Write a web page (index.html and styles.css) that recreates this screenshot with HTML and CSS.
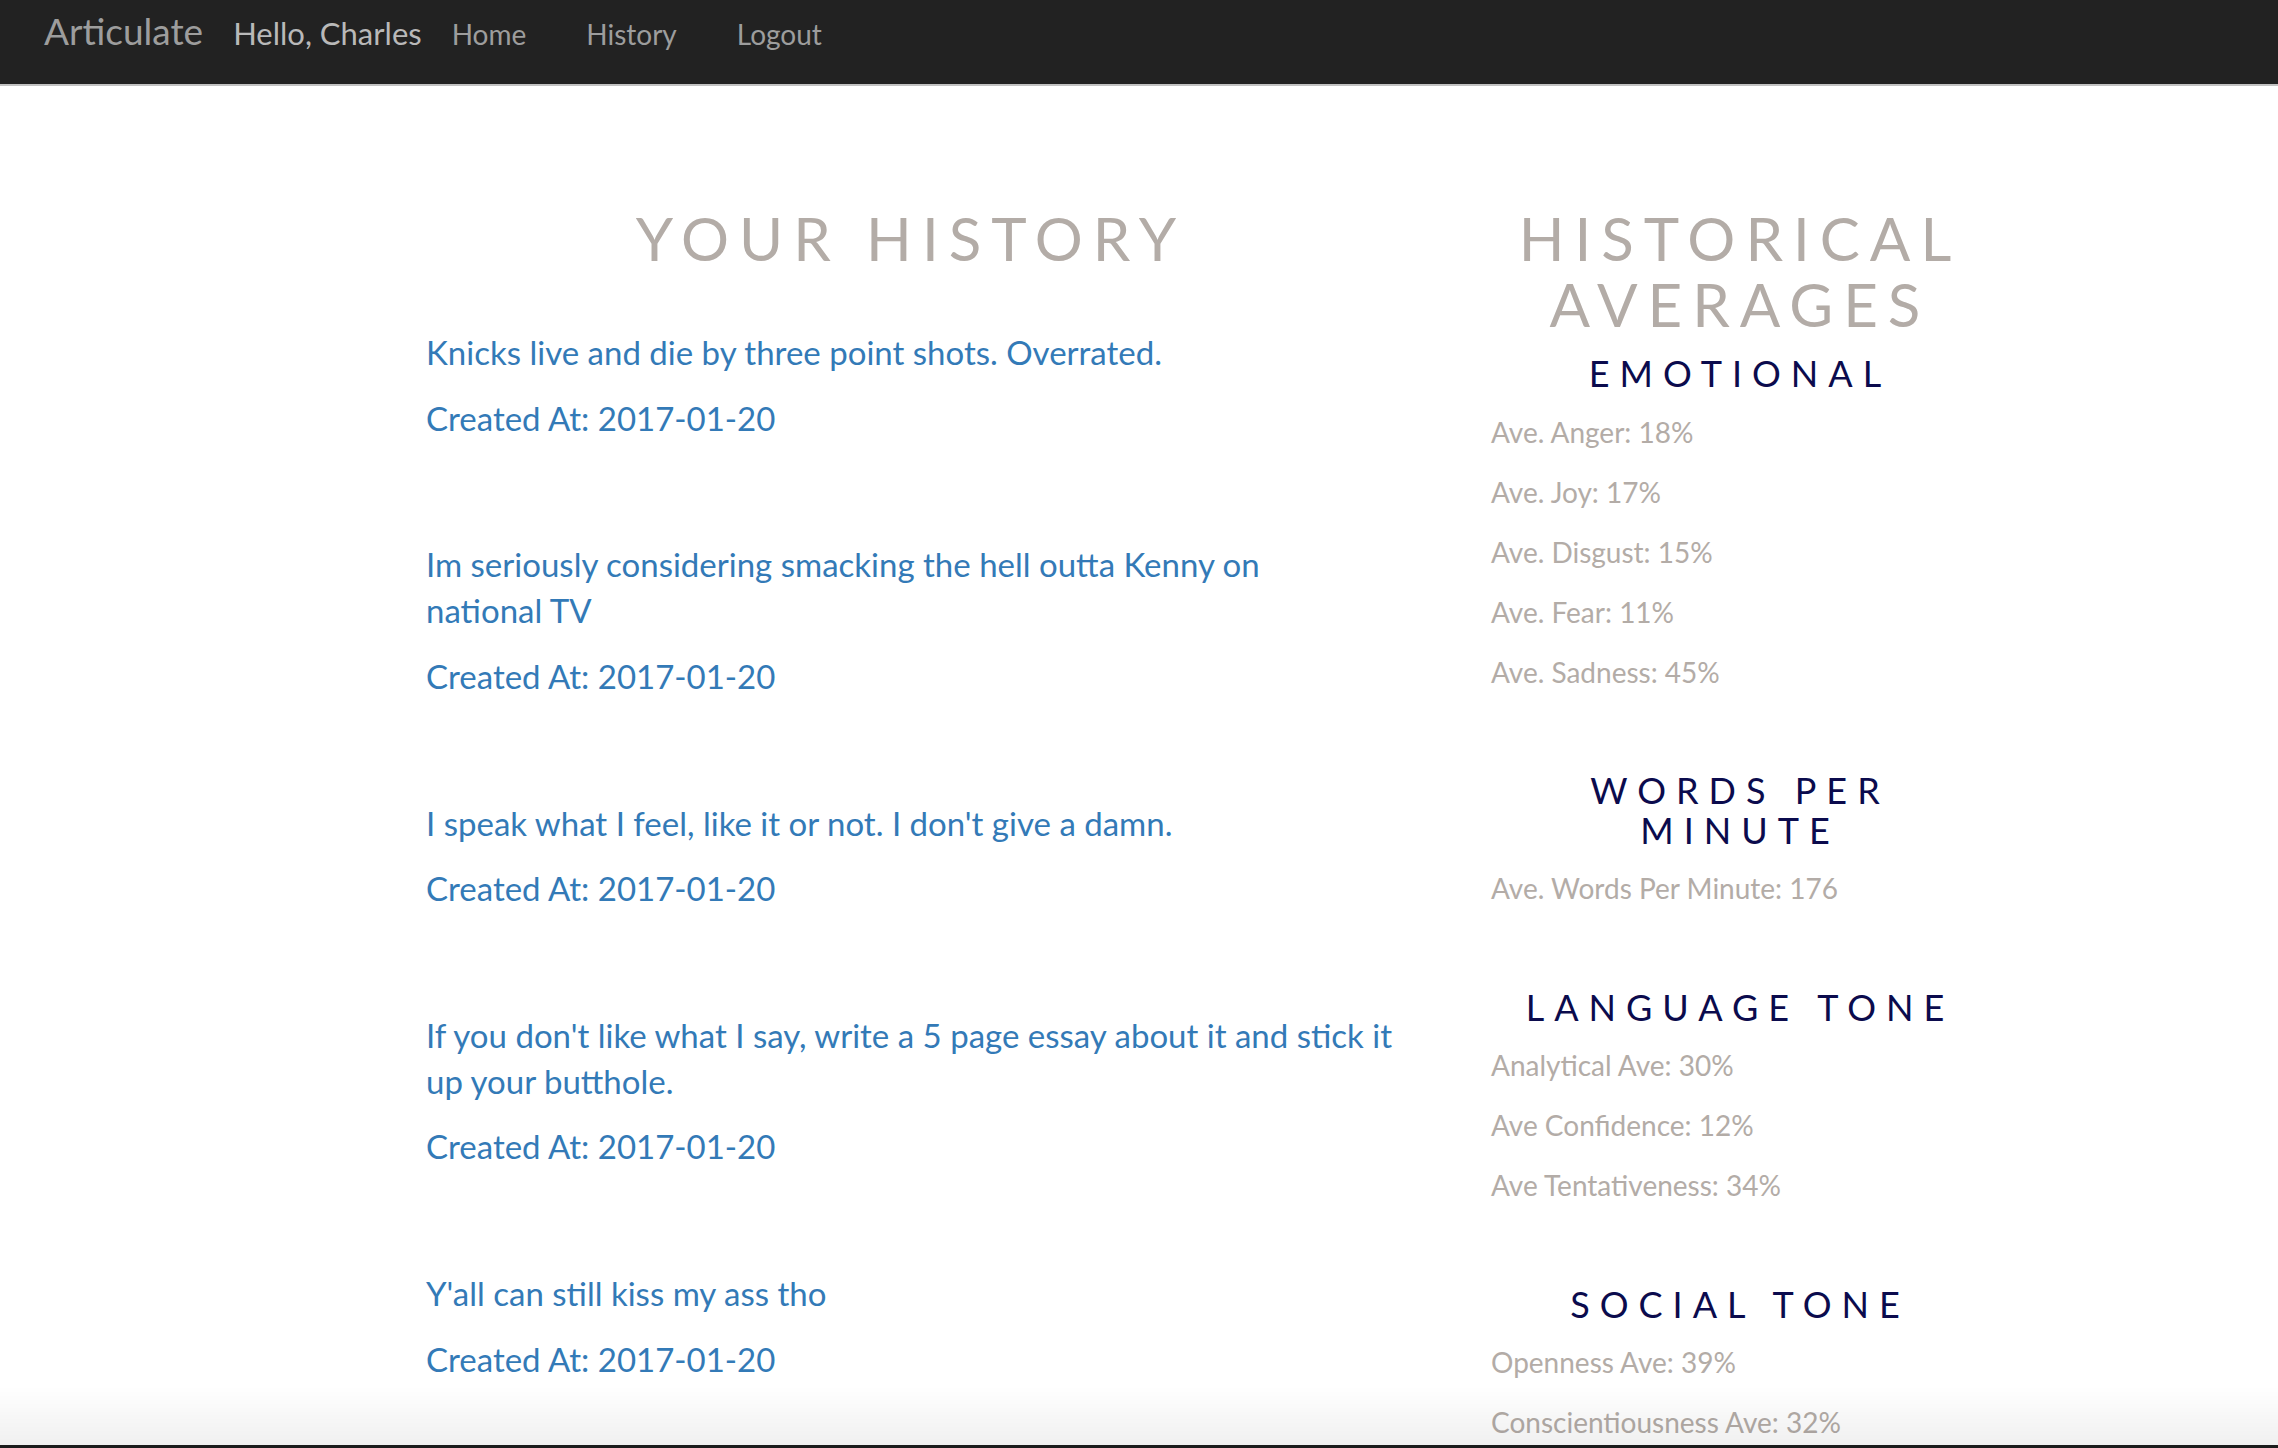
FILE: index.html
```html
<!DOCTYPE html>
<html lang="en">
<head>
<meta charset="utf-8">
<title>Articulate - History</title>
<link rel="stylesheet" href="styles.css">
</head>
<body>
<nav class="navbar">
  <a class="brand" href="#">Articulate</a>
  <span class="greeting">Hello, Charles</span>
  <ul class="nav-links">
    <li><a href="#">Home</a></li>
    <li><a href="#">History</a></li>
    <li><a href="#">Logout</a></li>
  </ul>
</nav>

<main class="page">
  <section class="history">
    <h1 class="title">Your History</h1>
    <div class="entry">
      <p class="msg">Knicks live and die by three point shots. Overrated.</p>
      <p class="date">Created At: 2017-01-20</p>
    </div>
    <div class="entry">
      <p class="msg">Im seriously considering smacking the hell outta Kenny on national&nbsp;TV</p>
      <p class="date">Created At: 2017-01-20</p>
    </div>
    <div class="entry">
      <p class="msg">I speak what I feel, like it or not. I don't give a damn.</p>
      <p class="date">Created At: 2017-01-20</p>
    </div>
    <div class="entry">
      <p class="msg">If you don't like what I say, write a 5 page essay about it and stick it up your butthole.</p>
      <p class="date">Created At: 2017-01-20</p>
    </div>
    <div class="entry">
      <p class="msg">Y'all can still kiss my ass tho</p>
      <p class="date">Created At: 2017-01-20</p>
    </div>
  </section>

  <aside class="averages">
    <h1 class="title">Historical Averages</h1>
    <div class="group">
      <h3 class="group-title">Emotional</h3>
      <p class="stat">Ave. Anger: 18%</p>
      <p class="stat">Ave. Joy: 17%</p>
      <p class="stat">Ave. Disgust: 15%</p>
      <p class="stat">Ave. Fear: 11%</p>
      <p class="stat">Ave. Sadness: 45%</p>
    </div>
    <div class="group">
      <h3 class="group-title">Words Per Minute</h3>
      <p class="stat">Ave. Words Per Minute: 176</p>
    </div>
    <div class="group">
      <h3 class="group-title">Language Tone</h3>
      <p class="stat">Analytical Ave: 30%</p>
      <p class="stat">Ave Confidence: 12%</p>
      <p class="stat">Ave Tentativeness: 34%</p>
    </div>
    <div class="group">
      <h3 class="group-title">Social Tone</h3>
      <p class="stat">Openness Ave: 39%</p>
      <p class="stat">Conscientiousness Ave: 32%</p>
    </div>
  </aside>
</main>

<div class="screen-edge"></div>
</body>
</html>
```

FILE: styles.css
```css
* { box-sizing: border-box; }

html, body {
  margin: 0;
  padding: 0;
  background: #ffffff;
  font-family: Lato, "Open Sans", "Liberation Sans", sans-serif;
}

/* ---------- navbar ---------- */
.navbar {
  display: flex;
  align-items: baseline;
  height: 86px;
  padding: 12px 0 0 44px;
  background: #222222;
  border-bottom: 2px solid #c2c2c2;
}

.brand {
  font-size: 37px;
  line-height: 1;
  color: #9d9d9d;
  text-decoration: none;
  margin-right: 30px;
}

.greeting {
  font-size: 31px;
  line-height: 1;
  color: #b9b9b9;
  margin-right: 30px;
}

.nav-links {
  display: flex;
  align-items: baseline;
  gap: 60px;
  list-style: none;
  margin: 0;
  padding: 0;
}

.nav-links a {
  font-size: 28px;
  line-height: 1;
  color: #9d9d9d;
  text-decoration: none;
}

/* ---------- page layout ---------- */
.page {
  display: grid;
  grid-template-columns: 1030px 558px;
  column-gap: 35px;
  padding: 119px 0 0 396px;
}

.history,
.averages {
  padding: 0 30px;
}

.title {
  margin: 0;
  font-size: 60px;
  line-height: 66px;
  font-weight: 400;
  letter-spacing: 10px;
  text-transform: uppercase;
  text-align: center;
  color: #b3aca7;
}

/* ---------- history entries ---------- */
.history .title {
  margin-bottom: 59px;
}

.msg,
.date {
  margin: 0 0 20px;
  font-size: 33px;
  line-height: 45.7px;
  color: #337ab7;
}

.date {
  margin-bottom: 101px;
}

/* ---------- averages ---------- */
.averages {
  display: flex;
  flex-direction: column;
}

.group {
  margin-top: 79.5px;
}

.group:first-of-type {
  margin-top: 17px;
}

.group-title {
  margin: 0 0 18px;
  font-size: 36px;
  line-height: 39.6px;
  font-weight: 400;
  letter-spacing: 10px;
  text-transform: uppercase;
  text-align: center;
  color: #0b0b4d;
}

.stat {
  margin: 0 0 20px;
  font-size: 28px;
  line-height: 40px;
  color: #b3aca7;
}

.stat:last-child {
  margin-bottom: 0;
}

/* ---------- bottom edge of the window ---------- */
.screen-edge {
  position: fixed;
  left: 0;
  right: 0;
  bottom: 0;
  height: 62px;
  background: linear-gradient(to bottom, rgba(0, 0, 0, 0), rgba(0, 0, 0, 0.06));
  border-bottom: 3px solid #1c1c1c;
  pointer-events: none;
}
```
